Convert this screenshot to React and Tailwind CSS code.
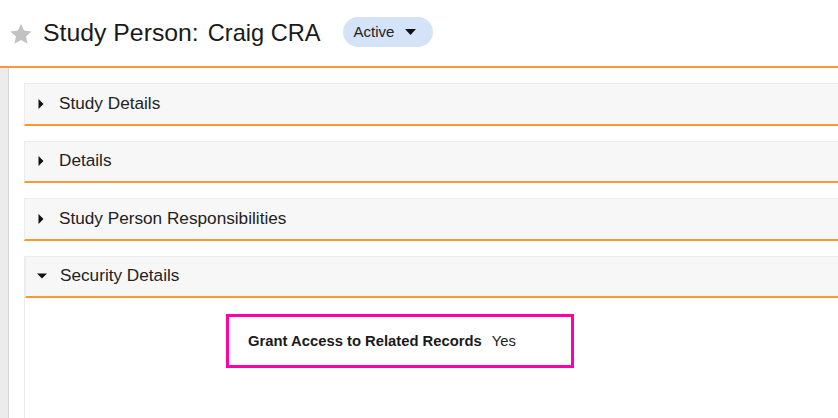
import React from "react";

function Caret({ open }) {
  return open ? (
    <svg width="12" height="8" viewBox="0 0 12 8" className="shrink-0">
      <path d="M1 1.5 L11 1.5 L6 6.5 Z" fill="#111" />
    </svg>
  ) : (
    <svg width="8" height="12" viewBox="0 0 8 12" className="shrink-0">
      <path d="M1.5 1 L6.5 6 L1.5 11 Z" fill="#111" />
    </svg>
  );
}

function Panel({ title, open, children }) {
  return (
    <div className={open ? "flex flex-col flex-1 border-l border-[#ececec]" : "flex flex-col"}>
      <div className="h-[42.5px] bg-[#f7f7f7] border-t border-[#ededed] border-l border-l-[#ececec] border-b-2 border-b-[#f79a34] flex items-center pl-[10px] gap-[12px]">
        <div className="w-[12px] flex justify-center">
          <Caret open={open} />
        </div>
        <span className="text-[17.2px] text-[#222]">{title}</span>
      </div>
      {open && <div className="flex-1 bg-white">{children}</div>}
    </div>
  );
}

export default function App() {
  return (
    <div
      className="w-[838px] h-[418px] overflow-hidden bg-white flex flex-col"
      style={{ fontFamily: "Arial, 'Liberation Sans', sans-serif" }}
    >
      <div className="h-[66px] flex items-center pl-[9px] shrink-0">
        <svg width="24" height="23" viewBox="0 0 24 23" className="mt-[2px]">
          <path
            d="M12 0.8 L15.1 7.6 L22.6 8.4 L17 13.4 L18.6 20.8 L12 17 L5.4 20.8 L7 13.4 L1.4 8.4 L8.9 7.6 Z"
            fill="#c2c2c2"
          />
        </svg>
        <span className="ml-[10px] text-[24.8px] text-[#1a1a1a] leading-none">Study Person:</span>
        <span className="ml-[9px] text-[23.6px] text-[#1a1a1a] leading-none mt-[2px]">Craig CRA</span>
        <div className="ml-[22px] h-[30px] w-[90px] rounded-full bg-[#d5e3f8] flex items-center pl-[11px] gap-[11px] mt-[-2px]">
          <span className="text-[15px] text-[#222]">Active</span>
          <svg width="11" height="6" viewBox="0 0 11 6">
            <path d="M0 0 L11 0 L5.5 6 Z" fill="#111" />
          </svg>
        </div>
      </div>
      <div className="h-[2px] bg-[#f79a34] shrink-0" />
      <div className="flex flex-1 min-h-0">
        <div className="w-[9px] bg-[#ececec] border-r border-[#d6d6d6] shrink-0" />
        <div className="flex-1 flex flex-col gap-[15px] pl-[15px] pt-[15px]">
          <Panel title="Study Details" />
          <Panel title="Details" />
          <Panel title="Study Person Responsibilities" />
          <Panel title="Security Details" open>
            <div className="pt-[16px] pl-[201px]">
              <div className="w-[348px] h-[54px] border-[3px] border-[#ff00aa] flex items-center pl-[19px] pt-[1px]">
                <span className="text-[14.8px] font-bold text-[#1a1a1a]">Grant Access to Related Records</span>
                <span className="ml-[10px] text-[14.8px] text-[#222]">Yes</span>
              </div>
            </div>
          </Panel>
        </div>
      </div>
    </div>
  );
}
